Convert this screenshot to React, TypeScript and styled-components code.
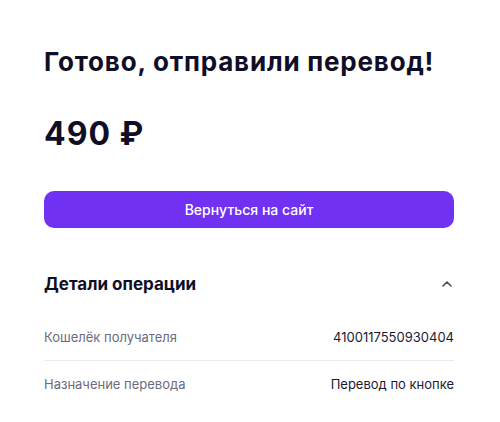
import React, { FC } from 'react';
import styled, { createGlobalStyle } from 'styled-components';

const GlobalStyle = createGlobalStyle`
  body {
    margin: 0;
    background: #fff;
    font-family: Inter, "Noto Sans", sans-serif;
    color: #0f0e26;
  }
`;

const Page = styled.div`
  width: 410px;
  padding: 46px 46px 0 44px;
  display: flex;
  flex-direction: column;
`;

const Title = styled.h1`
  margin: 0;
  font-size: 26px;
  line-height: 32px;
  font-weight: 700;
  letter-spacing: 0.8px;
`;

const Amount = styled.div`
  margin-top: 38px;
  font-size: 32px;
  line-height: 36px;
  font-weight: 700;
  letter-spacing: 1px;
`;

const BackButton = styled.button`
  margin-top: 39px;
  height: 37px;
  border: none;
  border-radius: 10px;
  background: #7131f2;
  color: #fff;
  font-family: inherit;
  font-size: 14px;
  font-weight: 500;
  cursor: pointer;
`;

const Details = styled.section`
  margin-top: 42px;
  display: flex;
  flex-direction: column;
`;

const DetailsHeader = styled.div`
  display: flex;
  justify-content: space-between;
  align-items: center;
  height: 28px;
`;

const DetailsTitle = styled.h2`
  margin: 0;
  font-size: 17px;
  font-weight: 700;
`;

const Rows = styled.div`
  margin-top: 16px;
`;

const Row = styled.div`
  display: flex;
  justify-content: space-between;
  align-items: center;
  height: 46px;
  font-size: 13px;
  & + & {
    border-top: 1px solid #ebebef;
  }
`;

const RowLabel = styled.span`
  color: #6c6b7f;
`;

const RowValue = styled.span`
  color: #1b1a33;
`;

const Chevron: FC = () => (
  <svg width="14" height="14" viewBox="0 0 14 14" fill="none">
    <path d="M3 9l4-4 4 4" stroke="#4a4a5e" strokeWidth="1.6" strokeLinecap="round" strokeLinejoin="round" />
  </svg>
);

const rows = [
  { label: 'Кошелёк получателя', value: '4100117550930404' },
  { label: 'Назначение перевода', value: 'Перевод по кнопке' },
];

export default function App() {
  return (
    <>
      <GlobalStyle />
      <Page>
        <Title>Готово, отправили перевод!</Title>
        <Amount>490 ₽</Amount>
        <BackButton>Вернуться на сайт</BackButton>
        <Details>
          <DetailsHeader>
            <DetailsTitle>Детали операции</DetailsTitle>
            <Chevron />
          </DetailsHeader>
          <Rows>
            {rows.map((r) => (
              <Row key={r.label}>
                <RowLabel>{r.label}</RowLabel>
                <RowValue>{r.value}</RowValue>
              </Row>
            ))}
          </Rows>
        </Details>
      </Page>
    </>
  );
}
